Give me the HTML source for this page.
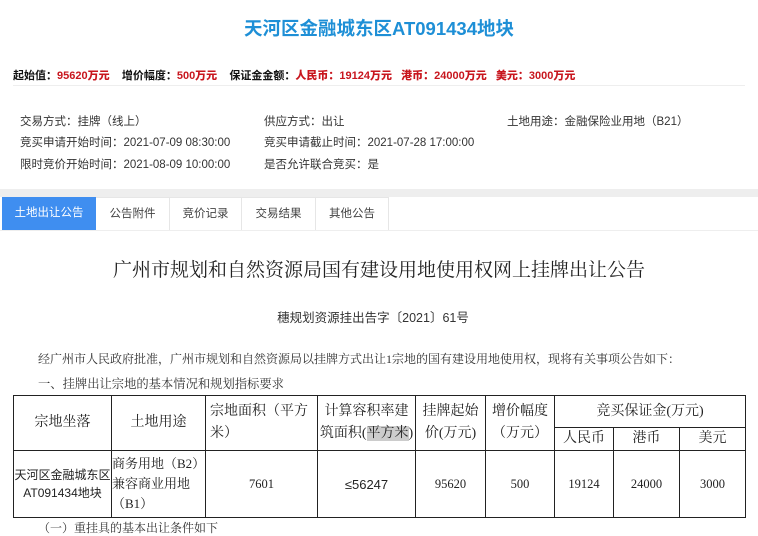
<!DOCTYPE html>
<html><head><meta charset="utf-8"><style>
*{margin:0;padding:0;box-sizing:border-box}
body{width:758px;height:526px;overflow:hidden;background:#fff;font-family:"Liberation Sans","Noto Sans CJK SC",sans-serif;color:#333;position:relative}
.abs{position:absolute;white-space:nowrap}
.title{left:0;width:758px;top:15px;text-align:center;font-size:18.5px;font-weight:bold;color:#1e8fd6}
.price{left:13px;top:67px;font-size:11px;font-weight:bold;color:#111}
.price b{color:#c8161e}
.sep{left:13px;right:13px;top:85px;height:1px;background:#eee}
.info{font-size:11.5px;color:#333}
.band{left:0;top:189px;width:758px;height:8px;background:#eeeeee}
.tab{top:197px;height:33px;line-height:33px;text-align:center;font-size:11.5px;color:#444;border-right:1px solid #e6e6e6;border-top:1px solid #e6e6e6}
.tab.on{background:#3f8ef0;color:#fff;border:none}
.serif{font-family:"Liberation Serif","Noto Serif CJK SC",serif}
table{position:absolute;left:13px;top:395px;width:732px;table-layout:fixed;border-collapse:collapse;font-family:"Liberation Serif","Noto Serif CJK SC",serif;font-size:12.5px;color:#222}
td{border:1.5px solid #222;text-align:center;vertical-align:middle;padding:0;overflow:hidden}
.h td{font-size:14px;line-height:22px}
</style></head><body>
<div class="abs title">天河区金融城东区AT091434地块</div>
<div class="abs price">起始值：<b>95620万元</b>&nbsp;&nbsp;&nbsp;&nbsp;增价幅度：<b>500万元</b>&nbsp;&nbsp;&nbsp;&nbsp;保证金金额：<b>人民币：19124万元&nbsp;&nbsp;&nbsp;港币：24000万元&nbsp;&nbsp;&nbsp;美元：3000万元</b></div>
<div class="abs sep"></div>
<div class="abs info" style="left:20px;top:113px">交易方式：挂牌（线上）</div>
<div class="abs info" style="left:264px;top:113px">供应方式：出让</div>
<div class="abs info" style="left:507px;top:113px">土地用途：金融保险业用地（B21）</div>
<div class="abs info" style="left:20px;top:134px">竞买申请开始时间：2021-07-09 08:30:00</div>
<div class="abs info" style="left:264px;top:134px">竞买申请截止时间：2021-07-28 17:00:00</div>
<div class="abs info" style="left:20px;top:156px">限时竞价开始时间：2021-08-09 10:00:00</div>
<div class="abs info" style="left:264px;top:156px">是否允许联合竞买：是</div>
<div class="abs band"></div>
<div class="abs tab on" style="left:2px;width:94px">土地出让公告</div>
<div class="abs tab" style="left:96px;width:74px">公告附件</div>
<div class="abs tab" style="left:170px;width:72px">竞价记录</div>
<div class="abs tab" style="left:242px;width:74px">交易结果</div>
<div class="abs tab" style="left:316px;width:73px">其他公告</div>
<div class="abs" style="left:0;top:230px;width:758px;height:1px;background:#eee"></div>
<div class="abs serif" style="left:0;width:758px;text-align:center;top:255px;font-size:19px;color:#222">广州市规划和自然资源局国有建设用地使用权网上挂牌出让公告</div>
<div class="abs" style="left:0;width:746px;text-align:center;top:307px;font-size:12.5px;color:#333">穗规划资源挂出告字〔2021〕61号</div>
<div class="abs serif" style="left:38px;top:350px;font-size:12px;color:#333">经广州市人民政府批准，广州市规划和自然资源局以挂牌方式出让1宗地的国有建设用地使用权，现将有关事项公告如下：</div>
<div class="abs serif" style="left:38px;top:374px;font-size:12.3px;color:#333">一、挂牌出让宗地的基本情况和规划指标要求</div>
<table>
<colgroup><col style="width:98px"><col style="width:94px"><col style="width:112px"><col style="width:98px"><col style="width:70px"><col style="width:69px"><col style="width:59px"><col style="width:66px"><col style="width:66px"></colgroup>
<tr class="h" style="height:32px"><td rowspan="2">宗地坐落</td><td rowspan="2">土地用途</td><td rowspan="2" style="text-align:left;padding-left:4px">宗地面积（平方米）</td><td rowspan="2">计算容积率建筑面积(<span style="background:#ccc">平方米</span>)</td><td rowspan="2">挂牌起始价(万元)</td><td rowspan="2">增价幅度（万元）</td><td colspan="3">竞买保证金(万元)</td></tr>
<tr class="h" style="height:20px"><td>人民币</td><td>港币</td><td>美元</td></tr>
<tr style="height:67px"><td style="font-family:'Liberation Sans','Noto Sans CJK SC',sans-serif;font-size:12px;line-height:18px">天河区金融城东区AT091434地块</td><td style="text-align:left;font-size:13px;line-height:20px">商务用地（B2）兼容商业用地（B1）</td><td>7601</td><td style="font-family:'Liberation Sans',sans-serif;font-size:13px">≤56247</td><td>95620</td><td>500</td><td>19124</td><td>24000</td><td>3000</td></tr>
</table>
<div class="abs serif" style="left:38px;top:519px;font-size:12px;color:#333">（一）重挂具的基本出让条件如下</div>
</body></html>
